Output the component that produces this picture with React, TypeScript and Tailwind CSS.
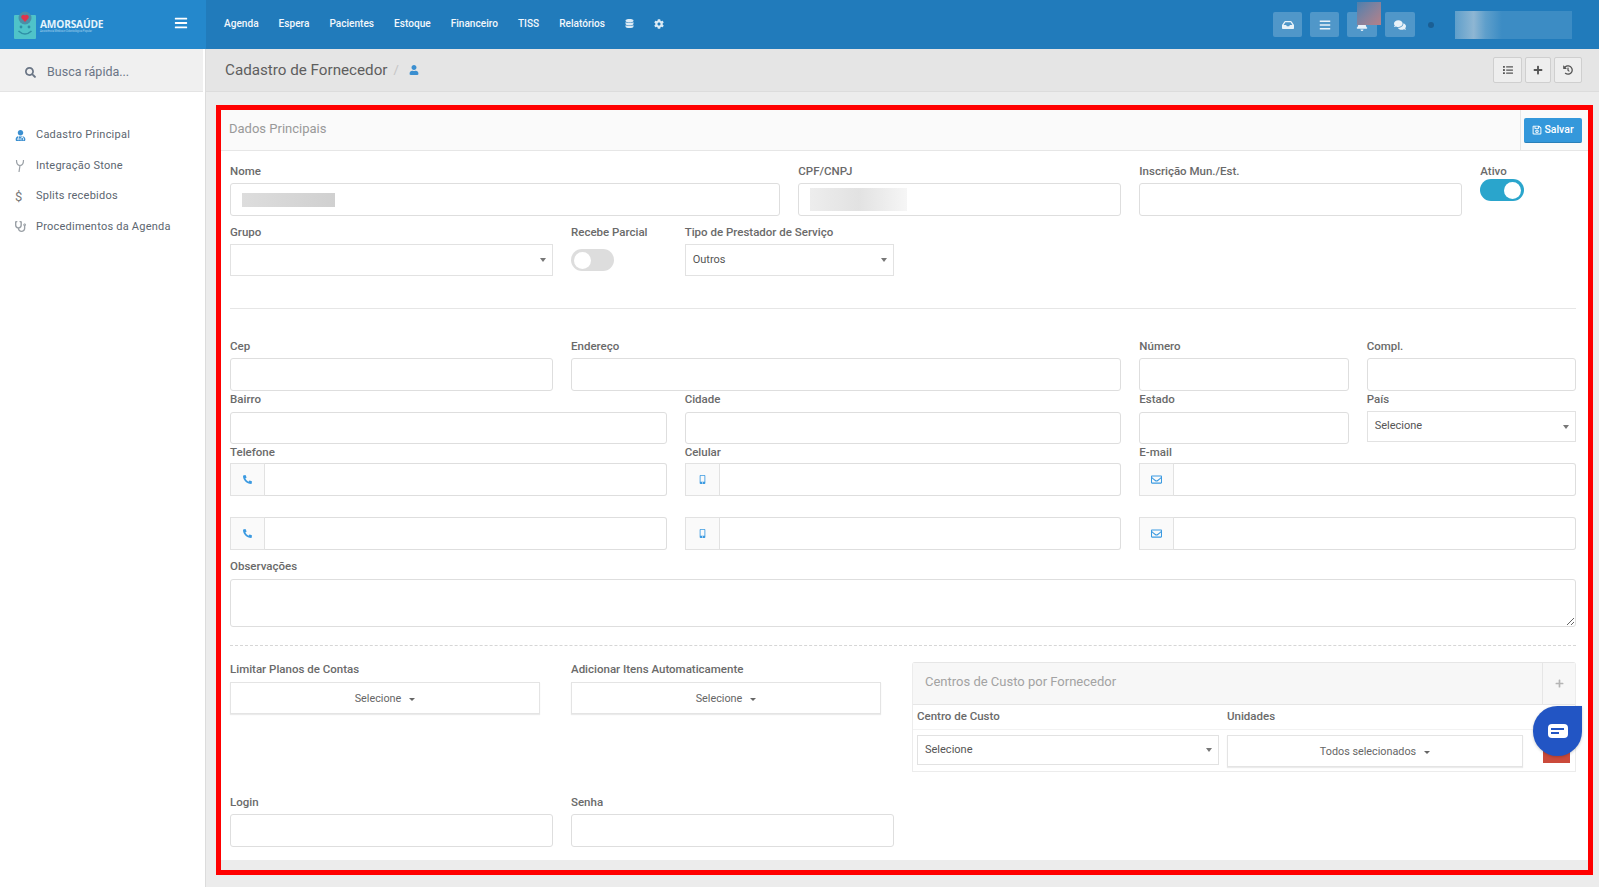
import type { ReactNode } from "react";
import {
  FaBars,
  FaBell,
  FaCog,
  FaComments,
  FaDatabase,
  FaHistory,
  FaInbox,
  FaList,
  FaMobileAlt,
  FaPhoneAlt,
  FaPlus,
  FaRegEnvelope,
  FaRegSave,
  FaSearch,
  FaStethoscope,
  FaUser,
  FaUserMd,
} from "react-icons/fa";

const navItems = ["Agenda", "Espera", "Pacientes", "Estoque", "Financeiro", "TISS", "Relatórios"];

function Logo() {
  return (
    <div className="flex items-center gap-[2px]">
      <svg width="24" height="28" viewBox="0 0 24 28" className="mt-[1px]">
        <rect x="0" y="4" width="22" height="24" rx="1" fill="#4fc3c9" />
        <circle cx="11" cy="7" r="6.5" fill="#4a8fa8" />
        <path d="M11 11 L7.5 7.2 A2.2 2.2 0 0 1 11 4.6 A2.2 2.2 0 0 1 14.5 7.2 Z" fill="#e0344c" />
        <circle cx="7" cy="16" r="1.4" fill="#2f8fa6" />
        <circle cx="15" cy="16" r="1.4" fill="#2f8fa6" />
        <path d="M4.5 20 Q11 26 17.5 20" stroke="#2f8fa6" strokeWidth="1.5" fill="none" />
      </svg>
      <div className="flex flex-col leading-none mt-[2px]">
        <span className="text-[10.2px] font-bold text-[#e6f4fb] tracking-[-0.2px] font-['Open_Sans',sans-serif]">AMORSAÚDE</span>
        <span className="text-[2.7px] text-[#a8d4ec] mt-[1px] whitespace-nowrap">Assistência Médica e Odontológica Popular</span>
      </div>
    </div>
  );
}

function TopButton({ children, w = "w-[29px]" }: { children: ReactNode; w?: string }) {
  return (
    <div className={`${w} h-[25px] rounded-[2px] bg-[#5097c9] flex items-center justify-center text-[#e8f2f9] text-[12px]`}>
      {children}
    </div>
  );
}

function Header() {
  return (
    <header className="h-[49px] flex bg-[#217bbb] shrink-0">
      <div className="w-[206px] bg-[#2488cc] flex items-center justify-between pl-[14px] pr-[18px]">
        <Logo />
        <FaBars className="text-white text-[14px] -mt-[4px]" />
      </div>
      <nav className="flex items-center gap-5 pl-[18px] text-[10.1px] font-medium text-[#f2f7fb] -mt-[2px] flex-1">
        {navItems.map((item) => (
          <a key={item} href="#">
            {item}
          </a>
        ))}
        <FaDatabase className="text-[9px] text-[#dcebf5]" />
        <FaCog className="text-[10px] text-[#dcebf5]" />
      </nav>
      <div className="relative flex items-center pr-[27px]">
        <div className="flex gap-2">
          <TopButton>
            <FaInbox />
          </TopButton>
          <TopButton>
            <FaBars />
          </TopButton>
          <TopButton w="w-[30px]">
            <FaBell />
          </TopButton>
          <TopButton w="w-[30px]">
            <FaComments />
          </TopButton>
        </div>
        <span className="w-[6px] h-[6px] rounded-full bg-[#1a5f94] ml-[13px]" />
        <div className="w-[117px] h-[28px] ml-[21px] bg-[linear-gradient(90deg,#5f9fcb_0%,#8eb6d3_16%,#5f9fcb_26%,#3c8cc4_40%,#3c8cc4_100%)]" />
      </div>
    </header>
  );
}

function SideItem({ icon, label }: { icon: ReactNode; label: string }) {
  return (
    <a href="#" className="h-[30.5px] flex items-center pl-[15px] text-[11px] tracking-[0.23px] text-[#5c6670]">
      <span className="w-[21px] flex text-[11px]">{icon}</span>
      {label}
    </a>
  );
}

function Sidebar() {
  return (
    <aside className="w-[206px] shrink-0 bg-white border-r border-[#dcdcdc] flex flex-col">
      <div className="h-[43px] w-[203px] bg-[#f0f0f0] border-b border-[#e4e4e4] flex items-center pl-[25px] pt-[5px] text-[12.5px] text-[#6a7585]">
        <FaSearch className="text-[11px] mr-[11px] text-[#6a7585]" />
        Busca rápida...
      </div>
      <div className="pt-[28px] flex flex-col">
        <SideItem icon={<FaUserMd className="text-[#3b8fd0]" />} label="Cadastro Principal" />
        <SideItem
          icon={
            <svg width="10" height="14" viewBox="0 0 10 14" fill="none" stroke="#9aa0a6" strokeWidth="1.2">
              <path d="M1.5 1 C1.5 5 3 6.5 5 6.5 C7 6.5 8.5 5 8.5 1" />
              <path d="M5 6.5 L4 13" />
            </svg>
          }
          label="Integração Stone"
        />
        <SideItem icon={<span className="text-[13px] leading-none text-[#777]">$</span>} label="Splits recebidos" />
        <SideItem icon={<FaStethoscope className="text-[#9aa0a6]" />} label="Procedimentos da Agenda" />
      </div>
    </aside>
  );
}

function ToolButton({ children, w }: { children: ReactNode; w: string }) {
  return (
    <div className={`${w} h-[26px] bg-[#eeeeee] border border-[#cfcfcf] rounded-[2px] flex items-center justify-center text-[10px] text-[#555]`}>
      {children}
    </div>
  );
}

function Breadcrumb() {
  return (
    <div className="h-[43px] bg-[#e5e5e5] border-b border-[#dcdcdc] flex items-center pl-[19px] pr-[17px] shrink-0">
      <span className="text-[15.2px] text-[#5e5e5e]">Cadastro de Fornecedor</span>
      <span className="text-[13px] text-[#c4c4c4] ml-[6px]">/</span>
      <FaUser className="text-[10px] text-[#3b8fd0] ml-[10px]" />
      <div className="ml-auto flex gap-[3px]">
        <ToolButton w="w-[29px]">
          <FaList />
        </ToolButton>
        <ToolButton w="w-[26px]">
          <FaPlus />
        </ToolButton>
        <ToolButton w="w-[28px]">
          <FaHistory />
        </ToolButton>
      </div>
    </div>
  );
}

function Field({ label, span, gap = "mb-1", children }: { label: string; span: string; gap?: string; children: ReactNode }) {
  return (
    <div className={span}>
      <label className={`block h-4 leading-4 text-[11.5px] font-medium text-[#6a6a6a] ${gap}`}>{label}</label>
      {children}
    </div>
  );
}

function TextInput({ h = "h-8" }: { h?: string }) {
  return <input className={`${h} w-full bg-white border border-[#dedede] rounded-[3px] outline-none block`} />;
}

function Caret() {
  return <span className="w-0 h-0 border-x-[3.5px] border-x-transparent border-t-[4px] border-t-[#777]" />;
}

function SelectBox({ value, h = "h-8" }: { value?: string; h?: string }) {
  return (
    <div className={`${h} w-full bg-white border border-[#e2e2e2] flex items-center justify-between pl-[7px] pr-[6px] text-[11px] text-[#555]`}>
      <span>{value}</span>
      <Caret />
    </div>
  );
}

function MultiButton({ value, className = "h-[32px]" }: { value: string; className?: string }) {
  return (
    <div className={`${className} bg-white border border-[#e4e4e4] shadow-[0_1px_1px_rgba(0,0,0,0.08)] flex items-center justify-center gap-[8px] pt-[2px] text-[10.8px] text-[#666]`}>
      {value}
      <span className="w-0 h-0 border-x-[3px] border-x-transparent border-t-[3.5px] border-t-[#666]" />
    </div>
  );
}

function IconInput({ icon, h = "h-[33px]" }: { icon: ReactNode; h?: string }) {
  return (
    <div className={`${h} flex`}>
      <span className="w-[35px] shrink-0 bg-[#fafafa] border border-[#e2e2e2] flex items-center justify-center text-[9px] text-[#3b9ae1]">
        {icon}
      </span>
      <input className="flex-1 min-w-0 bg-white border border-l-0 border-[#dedede] rounded-r-[3px] outline-none" />
    </div>
  );
}

function Toggle({ on }: { on?: boolean }) {
  return (
    <div
      className={`h-[22px] rounded-full flex items-center px-[3px] ${
        on ? "w-[44px] bg-[#2aa5cc] justify-end" : "w-[43px] bg-[#dddddd] justify-start"
      }`}
    >
      <span className="w-[17px] h-[17px] rounded-full bg-white" />
    </div>
  );
}

function CostCenters() {
  return (
    <div className="col-span-6 border border-[#ececec] border-t-[#e6e6e6] h-[110px] mt-[1px] rounded-t-[3px]">
      <div className="h-[42px] bg-[#f7f7f7] border-b border-[#e6e6e6] flex items-center pl-3 text-[13px] text-[#a3a3a3]">
        <span className="-mt-[3px]">Centros de Custo por Fornecedor</span>
        <span className="ml-auto w-[33px] h-full border-l border-[#e6e6e6] flex items-center justify-center text-[9px] text-[#b5b5b5]">
          <FaPlus />
        </span>
      </div>
      <div className="h-[25px] border-b border-[#f2f2f2] flex items-center pl-1 text-[11.5px] font-medium text-[#6a6a6a]">
        <span className="w-[310px]">Centro de Custo</span>
        <span>Unidades</span>
      </div>
      <div className="flex pl-1 pt-[5px]">
        <div className="w-[302px]">
          <SelectBox value="Selecione" h="h-[30px]" />
        </div>
        <MultiButton value="Todos selecionados" className="w-[296px] h-[32px] ml-2" />
        <div className="w-[27px] h-[28px] bg-[#cb4a3b] ml-[20px]" />
      </div>
    </div>
  );
}

function Form() {
  return (
    <div className="pr-[12px] pl-[9px] pt-3 pb-[13px] bg-white">
      <div className="grid grid-cols-12 gap-x-[18px] mb-[8px]">
        <Field label="Nome" span="col-span-5">
          <div className="relative">
            <TextInput h="h-[33px]" />
            <div className="absolute left-[12px] top-[10px] w-[93px] h-[14px] bg-gradient-to-r from-[#dddddd] to-[#d0d0d0]" />
          </div>
        </Field>
        <Field label="CPF/CNPJ" span="col-span-3">
          <div className="relative">
            <TextInput h="h-[33px]" />
            <div className="absolute left-[12px] top-[5px] w-[97px] h-[23px] bg-gradient-to-r from-[#ededed] via-[#e2e2e2] to-[#f6f6f6]" />
          </div>
        </Field>
        <Field label="Inscrição Mun./Est." span="col-span-3">
          <TextInput h="h-[33px]" />
        </Field>
        <Field label="Ativo" span="col-span-1" gap="mb-0">
          <Toggle on />
        </Field>
      </div>

      <div className="grid grid-cols-12 gap-x-[18px]">
        <Field label="Grupo" span="col-span-3">
          <SelectBox />
        </Field>
        <Field label="Recebe Parcial" span="col-span-1 whitespace-nowrap" gap="mb-[9px]">
          <Toggle />
        </Field>
        <Field label="Tipo de Prestador de Serviço" span="col-span-2 whitespace-nowrap">
          <SelectBox value="Outros" />
        </Field>
      </div>

      <hr className="mt-8 border-[#e6e6e6]" />

      <div className="grid grid-cols-12 gap-x-[18px] mt-[29px]">
        <Field label="Cep" span="col-span-3">
          <TextInput h="h-[33px]" />
        </Field>
        <Field label="Endereço" span="col-span-5">
          <TextInput h="h-[33px]" />
        </Field>
        <Field label="Número" span="col-span-2">
          <TextInput h="h-[33px]" />
        </Field>
        <Field label="Compl." span="col-span-2">
          <TextInput h="h-[33px]" />
        </Field>
      </div>

      <div className="grid grid-cols-12 gap-x-[18px]">
        <Field label="Bairro" span="col-span-4" gap="mb-[5px]">
          <TextInput h="h-[32px]" />
        </Field>
        <Field label="Cidade" span="col-span-4" gap="mb-[5px]">
          <TextInput h="h-[32px]" />
        </Field>
        <Field label="Estado" span="col-span-2" gap="mb-[5px]">
          <TextInput h="h-[32px]" />
        </Field>
        <Field label="País" span="col-span-2" gap="mb-[4px]">
          <SelectBox value="Selecione" h="h-[31px]" />
        </Field>
      </div>

      <div className="grid grid-cols-12 gap-x-[18px]">
        <Field label="Telefone" span="col-span-4" gap="mb-[3px]">
          <IconInput icon={<FaPhoneAlt />} />
        </Field>
        <Field label="Celular" span="col-span-4" gap="mb-[3px]">
          <IconInput icon={<FaMobileAlt />} />
        </Field>
        <Field label="E-mail" span="col-span-4" gap="mb-[3px]">
          <IconInput icon={<FaRegEnvelope className="text-[11px]" />} />
        </Field>
      </div>

      <div className="grid grid-cols-12 gap-x-[18px] mt-[21px]">
        <div className="col-span-4">
          <IconInput icon={<FaPhoneAlt />} />
        </div>
        <div className="col-span-4">
          <IconInput icon={<FaMobileAlt />} />
        </div>
        <div className="col-span-4">
          <IconInput icon={<FaRegEnvelope className="text-[11px]" />} />
        </div>
      </div>

      <div className="mt-[8px]">
        <label className="block h-4 leading-4 text-[11.5px] font-medium text-[#6a6a6a] mb-[5px]">Observações</label>
        <textarea className="block w-full h-[48px] bg-white border border-[#dedede] rounded-[3px] outline-none" />
      </div>

      <div className="mt-[18px] border-t border-dashed border-[#d6d6d6]" />

      <div className="grid grid-cols-12 gap-x-[18px] mt-[15px]">
        <Field label="Limitar Planos de Contas" span="col-span-3" gap="mb-[5px]">
          <MultiButton value="Selecione" className="w-[310px] h-[32px]" />
        </Field>
        <Field label="Adicionar Itens Automaticamente" span="col-span-3 whitespace-nowrap" gap="mb-[5px]">
          <MultiButton value="Selecione" className="w-[310px] h-[32px]" />
        </Field>
        <CostCenters />
      </div>

      <div className="grid grid-cols-12 gap-x-[18px] mt-[22px]">
        <Field label="Login" span="col-span-3">
          <TextInput h="h-[33px]" />
        </Field>
        <Field label="Senha" span="col-span-3">
          <TextInput h="h-[33px]" />
        </Field>
      </div>
    </div>
  );
}

export default function App() {
  return (
    <div className="relative h-[887px] w-[1599px] overflow-hidden flex flex-col bg-[#ececec] font-['Roboto','Liberation_Sans',sans-serif]">
      <Header />
      <div className="flex flex-1 min-h-0">
        <Sidebar />
        <main className="flex-1 min-w-0 flex flex-col">
          <Breadcrumb />
          <div className="mt-[13px] ml-[10px] mr-[6px] border-[5px] border-[#ff0000] pb-[10px]">
            <div className="h-[41px] bg-[#fafafa] border-b border-[#e6e6e6] flex items-center pl-2 text-[13px] text-[#999]">
              <span className="-mt-[2px]">Dados Principais</span>
              <div className="ml-auto h-full w-[68px] border-l border-[#e6e6e6] flex items-center pl-[3px]">
                <button className="w-[58px] h-[25px] bg-[#3498db] border-b border-[#2a80b9] rounded-[2px] text-white text-[10.5px] font-medium flex items-center justify-center gap-[2px]">
                  <FaRegSave className="text-[10px]" />
                  Salvar
                </button>
              </div>
            </div>
            <Form />
          </div>
        </main>
      </div>
      {/* blur patch over the bell and chat bubble over the page */}
      <div className="absolute left-[1357px] top-[2px] w-[24px] h-[23px] bg-gradient-to-br from-[#4a7fae] to-[#b58088]" />
      <div className="absolute left-[1533px] top-[706px] w-[49px] h-[50px] rounded-full rounded-tr-[6px] bg-[#2255c4] flex items-center justify-center shadow-[0_1px_3px_rgba(0,0,0,0.2)]">
        <div className="w-[20px] h-[14px] bg-white rounded-[4px] flex flex-col justify-center gap-[2px] pl-[3px]">
          <span className="w-[13px] h-[2px] bg-[#2255c4]" />
          <span className="w-[8px] h-[2px] bg-[#2255c4]" />
        </div>
      </div>
    </div>
  );
}
